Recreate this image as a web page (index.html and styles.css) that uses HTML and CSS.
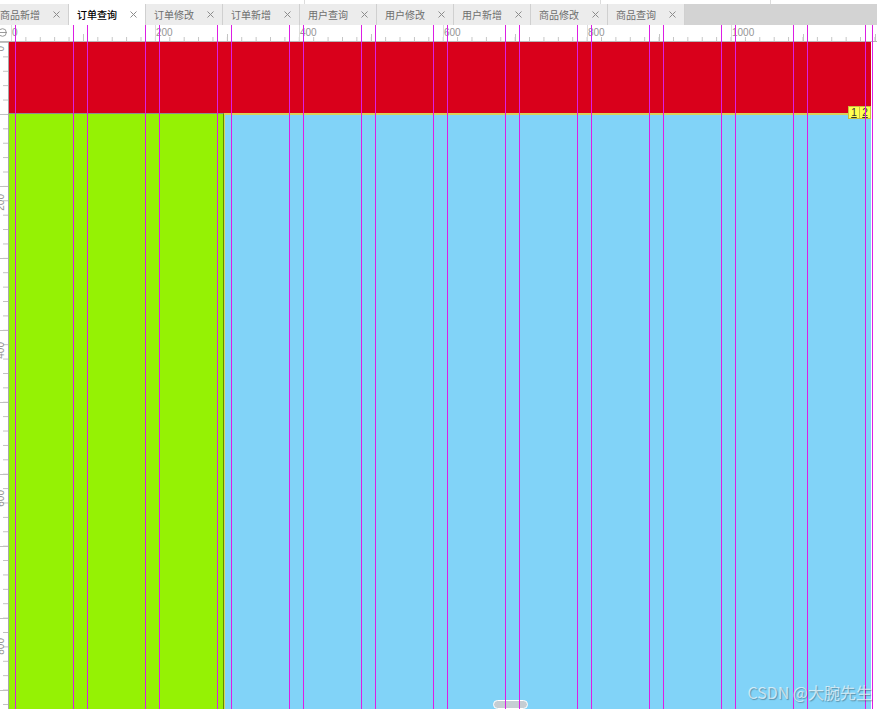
FILE: index.html
```html
<!DOCTYPE html>
<html lang="zh-CN">
<head>
<meta charset="utf-8">
<title>订单查询</title>
<link rel="stylesheet" href="styles.css">
</head>
<body>
<div class="app">
  <div class="topstrip">
    <span class="pane pane-a"></span>
    <span class="pane pane-b"></span>
    <span class="pane pane-c"></span>
  </div>

  <div class="tabbar">
    <div class="tab"><span class="tab-label">商品新增</span><svg class="tab-close" width="7" height="7" viewBox="0 0 7 7"><path d="M.5.5l6 6M6.5.5l-6 6"/></svg></div>
    <div class="tab active"><span class="tab-label">订单查询</span><svg class="tab-close" width="7" height="7" viewBox="0 0 7 7"><path d="M.5.5l6 6M6.5.5l-6 6"/></svg></div>
    <div class="tab"><span class="tab-label">订单修改</span><svg class="tab-close" width="7" height="7" viewBox="0 0 7 7"><path d="M.5.5l6 6M6.5.5l-6 6"/></svg></div>
    <div class="tab"><span class="tab-label">订单新增</span><svg class="tab-close" width="7" height="7" viewBox="0 0 7 7"><path d="M.5.5l6 6M6.5.5l-6 6"/></svg></div>
    <div class="tab"><span class="tab-label">用户查询</span><svg class="tab-close" width="7" height="7" viewBox="0 0 7 7"><path d="M.5.5l6 6M6.5.5l-6 6"/></svg></div>
    <div class="tab"><span class="tab-label">用户修改</span><svg class="tab-close" width="7" height="7" viewBox="0 0 7 7"><path d="M.5.5l6 6M6.5.5l-6 6"/></svg></div>
    <div class="tab"><span class="tab-label">用户新增</span><svg class="tab-close" width="7" height="7" viewBox="0 0 7 7"><path d="M.5.5l6 6M6.5.5l-6 6"/></svg></div>
    <div class="tab"><span class="tab-label">商品修改</span><svg class="tab-close" width="7" height="7" viewBox="0 0 7 7"><path d="M.5.5l6 6M6.5.5l-6 6"/></svg></div>
    <div class="tab"><span class="tab-label">商品查询</span><svg class="tab-close" width="7" height="7" viewBox="0 0 7 7"><path d="M.5.5l6 6M6.5.5l-6 6"/></svg></div>
  </div>

  <div class="ruler-row">
    <div class="corner">
      <svg width="9" height="10" viewBox="0 0 9 10"><circle cx="2.5" cy="4.5" r="3.8" fill="none" stroke="#9a9a9a"/><path d="M-2 4.5h9" stroke="#9a9a9a"/></svg>
    </div>
    <div class="hruler">
      <div class="hmark">0</div>
      <div class="hmark">200</div>
      <div class="hmark">400</div>
      <div class="hmark">600</div>
      <div class="hmark">800</div>
      <div class="hmark">1000</div>
    </div>
  </div>

  <div class="workspace">
    <div class="vruler">
      <div class="vmark"><span>0</span></div>
      <div class="vmark"><span>200</span></div>
      <div class="vmark"><span>400</span></div>
      <div class="vmark"><span>600</span></div>
      <div class="vmark"><span>800</span></div>
    </div>
    <div class="canvas">
      <div class="header-block"></div>
      <div class="body-row">
        <div class="side-block"></div>
        <div class="main-block"></div>
      </div>
      <div class="badge"><span>1</span><span>2</span></div>
      <div class="hscroll-thumb"></div>
    </div>
  </div>

  <div class="guides">
    <div class="gcol"></div><div class="gcol"></div><div class="gcol"></div>
    <div class="gcol"></div><div class="gcol"></div><div class="gcol"></div>
    <div class="gcol"></div><div class="gcol"></div><div class="gcol"></div>
    <div class="gcol"></div><div class="gcol"></div><div class="gcol gcol-last"></div>
    <div class="gline"></div>
  </div>

  <div class="watermark">CSDN @大腕先生</div>
</div>
</body>
</html>
```
FILE: styles.css
```css
* {
  box-sizing: border-box;
  margin: 0;
  padding: 0;
}

html, body {
  width: 877px;
  height: 709px;
  overflow: hidden;
  background: #fff;
}

body {
  font-family: "Noto Sans CJK SC", "Liberation Sans", sans-serif;
}

.app {
  --guide: #dc1ee4;
  position: relative;
  width: 877px;
  height: 709px;
  display: flex;
  flex-direction: column;
}

/* thin strip of the pane above */
.topstrip {
  height: 4px;
  flex: none;
  display: flex;
  background: #fff;
}
.pane {
  height: 4px;
  border-right: 1px solid #dcdcdc;
}
.pane-a { width: 305px; }
.pane-b { width: 296px; }
.pane-c { width: 170px; }

/* page tabs */
.tabbar {
  height: 21px;
  flex: none;
  display: flex;
  background: #d3d3d3;
  overflow: hidden;
}
.tab {
  flex: 0 0 77px;
  display: flex;
  align-items: center;
  justify-content: space-between;
  padding: 0 8px;
  background: #ececec;
  border-right: 1px solid #d0d0d0;
  font-size: 10px;
  line-height: 12px;
  color: #6e6e6e;
  white-space: nowrap;
}
.tab:first-child {
  margin-left: -8px;
}
.tab.active {
  background: #fff;
  color: #000;
  font-weight: 500;
}
.tab-close {
  display: block;
  stroke: #8c8c8c;
  stroke-width: 1;
  fill: none;
}

/* rulers */
.ruler-row {
  height: 17px;
  flex: none;
  display: flex;
  background: #fff;
  border-bottom: 1px solid #b8b8b8;
}
.corner {
  width: 9px;
  flex: none;
  overflow: hidden;
}
.corner svg {
  display: block;
  margin-top: 3px;
}
.hruler {
  flex: 1;
  display: flex;
  padding-left: 2px;
  overflow: hidden;
  background-image:
    linear-gradient(to right, #c4c4c4 1px, transparent 1px),
    linear-gradient(to right, #c4c4c4 1px, transparent 1px);
  background-size: 14.4px 4px, 72px 7px;
  background-position: 2px 100%, 2px 100%;
  background-repeat: repeat-x;
}
.hmark {
  flex: 0 0 144px;
  border-left: 1px solid #dcdcdc;
  font: 10px/14px "Liberation Sans", sans-serif;
  color: #959595;
  padding-top: 1px;
}

.workspace {
  flex: 1;
  display: flex;
  min-height: 0;
}
.vruler {
  width: 9px;
  flex: none;
  overflow: hidden;
  border-right: 1px solid #a8a8a8;
  background-image:
    linear-gradient(to bottom, #c0c0c0 1px, transparent 1px),
    linear-gradient(to bottom, #c0c0c0 1px, transparent 1px);
  background-size: 5px 14.4px, 8px 72px;
  background-position: 100% 0, 100% 0;
  background-repeat: repeat-y;
}
.vmark {
  height: 144px;
}
.vmark span {
  display: block;
  width: 8px;
  margin-top: 4px;
  margin-left: -3px;
  writing-mode: vertical-rl;
  transform: rotate(180deg);
  font: 10px/8px "Liberation Sans", sans-serif;
  color: #959595;
}

/* design canvas */
.canvas {
  flex: 1;
  position: relative;
  display: flex;
  flex-direction: column;
  background: #fff;
  overflow: hidden;
}
.header-block {
  flex: none;
  width: 862px;
  height: 71px;
  background: #d9001b;
}
.body-row {
  flex: 1;
  display: flex;
  width: 862px;
}
.side-block {
  width: 215px;
  flex: none;
  background: #95f204;
  border-top: 1px solid #8f8f8f;
  border-right: 1px solid #5e8c00;
}
.main-block {
  flex: 1;
  background: #81d3f8;
  border-top: 2px solid #d9d258;
  border-left: 1px solid #d9d258;
}

.badge {
  position: absolute;
  top: 64px;
  right: 6px;
  display: flex;
  z-index: 2;
}
.badge span {
  width: 12px;
  height: 13px;
  background: #ffff50;
  border: 1px solid #c8c03e;
  font: 10px/11px "Liberation Sans", sans-serif;
  color: #333;
  text-align: center;
  text-decoration: underline;
}
.badge span + span {
  margin-left: -1px;
}

.hscroll-thumb {
  position: absolute;
  left: 484px;
  top: 658px;
  width: 35px;
  height: 9px;
  border-radius: 5px;
  background: #c5cdd3;
  border: 1px solid #fff;
  z-index: 2;
}

/* layout guides */
.guides {
  position: absolute;
  left: 15px;
  top: 25px;
  bottom: 0;
  display: flex;
  pointer-events: none;
  z-index: 5;
}
.gcol {
  width: 59px;
  margin-right: 13px;
  border-left: 1px solid var(--guide);
  border-right: 1px solid var(--guide);
}
.gcol-last {
  margin-right: 6px;
}
.gline {
  width: 1px;
  background: var(--guide);
}

.watermark {
  position: absolute;
  right: 5px;
  top: 682px;
  font-family: "Noto Sans CJK SC", "Liberation Sans", sans-serif;
  font-size: 16px;
  line-height: 20px;
  color: rgba(255, 255, 255, 0.65);
  text-shadow: 1px 1px 1px rgba(0, 0, 0, 0.3);
  white-space: nowrap;
  z-index: 6;
}
```
